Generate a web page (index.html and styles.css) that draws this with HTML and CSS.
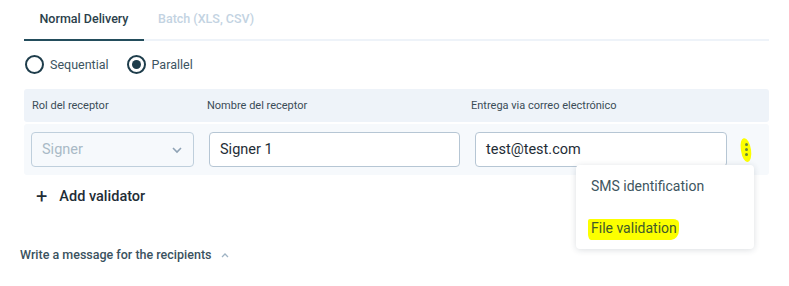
FILE: index.html
```html
<!DOCTYPE html>
<html>
<head>
<meta charset="utf-8">
<link rel="stylesheet" href="styles.css">
</head>
<body>
<div class="page">
  <div class="tabs">
    <div class="tab active">Normal Delivery</div>
    <div class="tab muted">Batch (XLS, CSV)</div>
  </div>
  <div class="radios">
    <label class="radio"><span class="circle"></span>Sequential</label>
    <label class="radio"><span class="circle on"><span class="dot"></span></span>Parallel</label>
  </div>
  <div class="table">
    <div class="head">
      <div class="c1">Rol del receptor</div>
      <div class="c2">Nombre del receptor</div>
      <div class="c3">Entrega via correo electrónico</div>
    </div>
    <div class="row">
      <div class="select c1f">
        <span>Signer</span>
        <svg width="12" height="8" viewBox="0 0 12 8"><path d="M2 2 L6 6 L10 2" fill="none" stroke="#8fa3b5" stroke-width="1.6"/></svg>
      </div>
      <div class="input c2f">Signer 1</div>
      <div class="input c3f">test@test.com</div>
      <div class="kebab">
        <span class="hl"></span>
        <span class="dots"><i></i><i></i><i></i></span>
      </div>
      <div class="menu">
        <div class="item">SMS identification</div>
        <div class="item"><span class="mark">File validation</span></div>
      </div>
    </div>
  </div>
  <div class="add"><span class="plus">+</span>Add validator</div>
  <div class="msg">Write a message for the recipients
    <svg width="10" height="6" viewBox="0 0 10 6"><path d="M2 5 L5 2 L8 5" fill="none" stroke="#9fb3c4" stroke-width="1.3"/></svg>
  </div>
</div>
</body>
</html>
```

FILE: styles.css
```css
* { box-sizing: border-box; }
body {
  margin: 0;
  background: #fff;
  font-family: Roboto, "Noto Sans", sans-serif;
  color: #1f3a48;
}
.page {
  padding: 0 20px 0 24px;
  width: 789px;
}
.tabs {
  display: flex;
  border-bottom: 2px solid #eef3f9;
  height: 41px;
}
.tab {
  font-size: 12.5px;
  font-weight: 500;
  height: 41px;
  padding-top: 11px;
}
.tab.active {
  width: 120px;
  text-align: center;
  border-bottom: 2px solid #234d5c;
  color: #2b3f4b;
}
.tab.muted {
  color: #c3d3e2;
  padding-left: 14px;
}
.radios {
  display: flex;
  gap: 17px;
  margin-top: 13px;
  height: 21px;
  align-items: center;
}
.radio {
  display: flex;
  align-items: center;
  font-size: 12.5px;
  color: #3c5461;
  gap: 6px;
}
.circle {
  width: 19px;
  height: 19px;
  border: 2px solid #1e3d4b;
  border-radius: 50%;
  display: flex;
  align-items: center;
  justify-content: center;
  margin-left: 1px;
}
.dot {
  width: 9px;
  height: 9px;
  border-radius: 50%;
  background: #1e3d4b;
}
.table {
  margin-top: 14px;
  width: 745px;
}
.head {
  display: flex;
  background: #eef3f9;
  height: 33px;
  align-items: center;
  font-size: 11px;
  color: #3a4c57;
  border-radius: 3px;
}
.head .c1 { width: 183px; padding-left: 8px; }
.head .c2 { width: 264px; }
.head .c3 { }
.row {
  position: relative;
  margin-top: 2px;
  height: 51px;
  background: #f6f9fc;
  display: flex;
  align-items: center;
  padding-left: 7px;
  border-radius: 3px;
}
.select, .input {
  height: 35px;
  border: 1px solid #b6c6d4;
  border-radius: 4px;
  display: flex;
  align-items: center;
  padding-left: 10px;
  font-size: 14.5px;
  background: #fff;
}
.select {
  width: 163px;
  background: #f6f9fc;
  color: #a9b9c6;
  justify-content: space-between;
  padding-right: 10px;
  border-color: #bfcfdc;
}
.input { color: #1f2d36; }
.c2f { width: 251px; margin-left: 15px; }
.c3f { width: 252px; margin-left: 15px; }
.kebab {
  position: relative;
  width: 10px;
  height: 24px;
  margin-left: 14px;
  display: flex;
  align-items: center;
  justify-content: center;
}
.hl {
  position: absolute;
  left: 0;
  top: 0;
  width: 10px;
  height: 24px;
  background: #fcff00;
  border-radius: 45% 55% 50% 50%;
  transform: rotate(-8deg);
}
.dots {
  position: relative;
  display: flex;
  flex-direction: column;
  gap: 2px;
}
.dots i {
  width: 3px;
  height: 3px;
  border-radius: 50%;
  background: #6a8a3a;
  display: block;
}
.menu {
  position: absolute;
  left: 552px;
  top: 41px;
  width: 178px;
  height: 84px;
  background: #fff;
  border-radius: 4px;
  box-shadow: 0 1px 6px rgba(30, 50, 70, 0.16);
  padding-top: 9px;
  z-index: 2;
}
.item {
  height: 42px;
  padding-left: 15px;
  font-size: 14px;
  color: #3e5560;
  line-height: 24px;
}
.mark {
  background: #fcff00;
  padding: 1px 2px 4px 3px;
  margin-left: -3px;
  color: #405a2a;
  border-radius: 2px 6px 8px 3px / 2px 4px 10px 6px;
}
.add {
  display: flex;
  align-items: center;
  margin-top: 10px;
  padding-left: 12px;
  font-size: 14.5px;
  font-weight: 500;
  color: #1f2d36;
  height: 22px;
}
.plus {
  font-size: 20px;
  font-weight: 400;
  margin-right: 12px;
  line-height: 1;
}
.msg {
  margin-left: -4px;
  margin-top: 40px;
  font-size: 12.5px;
  font-weight: 500;
  color: #3a5260;
  display: flex;
  align-items: center;
  gap: 9px;
}
```
